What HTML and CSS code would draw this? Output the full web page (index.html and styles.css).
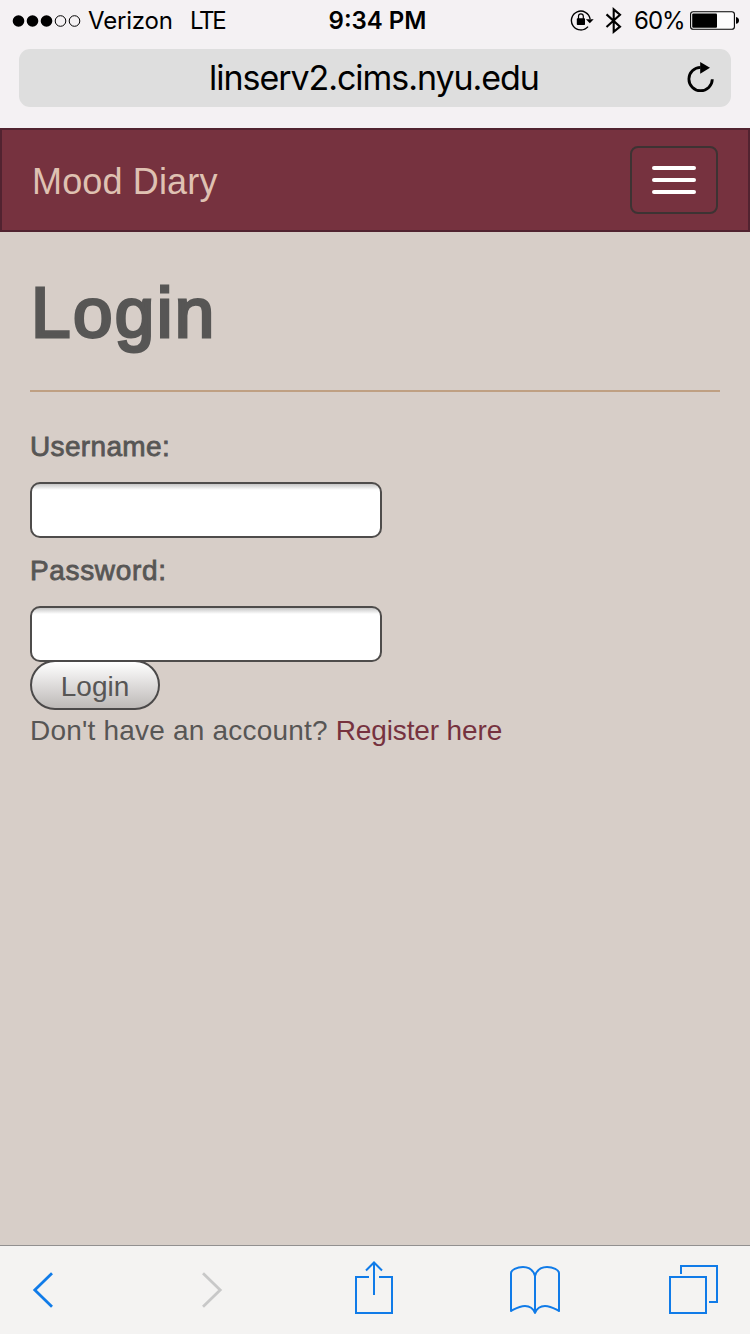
FILE: index.html
```html
<!DOCTYPE html>
<html lang="en">
<head>
<meta charset="utf-8">
<title>Mood Diary</title>
<link rel="stylesheet" href="styles.css">
</head>
<body>
<div class="screen">
  <header class="browser-top">
    <div class="status">
      <div class="status-left">
        <svg class="signal" width="70" height="16" viewBox="0 0 70 16"><circle cx="6.5" cy="8" r="5.8"/><circle cx="20.5" cy="8" r="5.8"/><circle cx="34.5" cy="8" r="5.8"/><g fill="none" stroke="#000" stroke-width="1"><circle cx="48.5" cy="8" r="5.3"/><circle cx="62.5" cy="8" r="5.3"/></g></svg>
        <span class="carrier">Verizon</span>
        <span class="network">LTE</span>
      </div>
      <div class="time">9:34 PM</div>
      <div class="status-right">
        <svg class="lock" width="24" height="24" viewBox="0 0 24 24"><path d="M18 17.6A9.4 9.4 0 1 1 20.1 10" fill="none" stroke="#000" stroke-width="1.4"/><path d="M15.9 10.2h7.8l-3.9 4z"/><rect x="6.8" y="9.3" width="8.2" height="6.6" rx=".7"/><path d="M8.5 10V7.2a2.4 2.4 0 0 1 4.8 0V10" fill="none" stroke="#000" stroke-width="1.2"/></svg>
        <svg class="bluetooth" width="18" height="28" viewBox="0 0 18 28"><path d="M1.5 7.4L15 19.6 8.7 24.8V2.4L15 7.8 1.5 20" fill="none" stroke="#000" stroke-width="2.1"/></svg>
        <span class="percent">60%</span>
        <svg class="battery" width="50" height="20" viewBox="0 0 50 20"><rect x=".6" y=".7" width="43.8" height="17.6" rx="2.6" fill="#fdfcfd" stroke="#000" stroke-width="1.1"/><rect x="2.2" y="2.4" width="24.8" height="14.4" rx="1"/><path d="M46 6q3 .6 3 3.4t-3 3.4z"/></svg>
      </div>
    </div>
    <div class="address">
      <span class="url">linserv2.cims.nyu.edu</span>
      <svg class="reload" width="30" height="32" viewBox="0 0 30 32"><path d="M26.3 18.2A11.7 11.7 0 1 1 14.6 6.3" fill="none" stroke="#000" stroke-width="2.8"/><path d="M14.2.9v11.8l9.8-5.9z"/></svg>
    </div>
  </header>

  <nav class="navbar">
    <a class="brand">Mood Diary</a>
    <button class="toggle" aria-label="Menu"><span class="bar"></span><span class="bar"></span><span class="bar"></span></button>
  </nav>

  <main class="content">
    <h1 class="title">Login</h1>
    <form class="form">
      <label class="label" for="user">Username:</label>
      <input class="field" id="user" type="text">
      <label class="label label-next" for="pass">Password:</label>
      <input class="field" id="pass" type="password">
      <button class="submit" type="button">Login</button>
    </form>
    <p class="signup">Don't have an account? <a class="link">Register here</a></p>
  </main>

  <footer class="toolbar">
    <svg class="back" width="24" height="40" viewBox="0 0 24 40"><path d="M20 3.2L2.8 20 20 36.8"/></svg>
    <svg class="forward" width="24" height="40" viewBox="0 0 24 40"><path d="M3 3.2L20.2 20 3 36.8"/></svg>
    <svg class="share" width="40" height="56" viewBox="0 0 40 56"><path d="M15 17H2v36h36V17H25M20 35V3M12 10.5L20 2.5l8 8"/></svg>
    <svg class="book" width="52" height="52" viewBox="0 0 52 52"><path stroke-linejoin="round" d="M26 11C24 4 19 2 14 2 8 2 2 5 2 8v38c4-2 8-5 14-5 5 0 8 2 10 7 2-5 5-7 10-7 6 0 10 3 14 5V8c0-3-6-6-12-6-5 0-10 2-12 9zM26 11v37"/></svg>
    <svg class="tabs" width="50" height="50" viewBox="0 0 50 50"><path d="M2 13h36v36H2zM13 10V2h36v36h-8"/></svg>
  </footer>
</div>
</body>
</html>
```
FILE: styles.css
```css
* { box-sizing: border-box; }
body { margin: 0; }
.screen { width: 750px; height: 1334px; display: flex; flex-direction: column; background: #d7cec8; color: #575655; font: 28px/40px "Liberation Sans", Arial, sans-serif; overflow: hidden; }
svg { display: block; flex: none; }

.browser-top { height: 128px; flex: none; background: #f4f1f3; color: #000; font-family: Inter, sans-serif; }
.status { height: 49px; padding: 1px 10px 8px 12px; display: grid; grid-template-columns: 1fr 104px 1fr; align-items: center; font-size: 24px; line-height: 40px; white-space: nowrap; }
.status-left, .status-right { display: flex; align-items: center; }
.status-right { justify-content: flex-end; }
.carrier { margin-left: 6px; width: 84px; letter-spacing: -.2px; }
.network { margin-left: 18px; letter-spacing: -2.2px; }
.time { text-align: center; font-weight: 600; font-size: 24px; padding-left: 3px; }
.bluetooth { margin-left: 11px; }
.percent { margin-left: 11px; width: 50px; letter-spacing: -1px; }
.battery { margin-left: 6px; }
.address { height: 58px; margin: 0 19px; border-radius: 11px; background: #dedede; display: flex; align-items: center; justify-content: center; position: relative; font-size: 34px; line-height: 58px; }
.url { letter-spacing: -1.05px; margin-left: -2px; }
.reload { position: absolute; right: 15px; top: 12px; }

.navbar { height: 104px; flex: none; border: 2px solid #512330; background: #76323f; display: flex; align-items: center; justify-content: space-between; padding: 0 30px; }
.brand { color: #dfc1b2; font-size: 36px; line-height: 48px; margin-top: 4px; letter-spacing: .15px; }
.toggle { width: 88px; height: 68px; border: 2px solid #3d3333; border-radius: 8px; background: none; padding: 0; display: flex; flex-direction: column; align-items: center; justify-content: center; gap: 8px; }
.bar { width: 44px; height: 4px; border-radius: 2px; background: #fff; }

.content { flex: 1; padding: 42px 30px 0; }
.title { margin: 0 0 35px; height: 118px; padding-left: 1px; border-bottom: 2px solid #bfa083; font-size: 71px; line-height: 78px; font-weight: 400; letter-spacing: 2.4px; -webkit-text-stroke: 3px #575655; }
.form { display: flex; flex-direction: column; align-items: flex-start; }
.label { height: 55px; -webkit-text-stroke: .8px #575655; letter-spacing: .35px; }
.label-next { margin-top: 13px; letter-spacing: .65px; }
.field { width: 352px; height: 56px; border: 2px solid #4e4c4b; border-radius: 10px; background: #fff linear-gradient(#c6c6c6, #fff 6px) no-repeat; outline: none; }
.submit { width: 130px; height: 50px; margin-top: -2px; padding: 4px 0 0; border: 2px solid #4b4949; border-radius: 25px; background: linear-gradient(#fff, #bdb9b7); color: #575655; font: inherit; position: relative; }
.signup { margin: 1px 0 0; letter-spacing: .2px; }
.link { color: #76323f; letter-spacing: -.13px; }

.toolbar { height: 89px; flex: none; border-top: 1px solid #929090; background: #f4f3f2; display: flex; align-items: flex-start; }
.toolbar svg { fill: none; stroke: #107be8; stroke-width: 2; }
.toolbar .back { margin: 24px 0 0 32px; stroke-width: 2.8; }
.toolbar .forward { margin: 24px 0 0 144px; stroke: #c8c8c8; stroke-width: 2.8; }
.share { margin: 14px 0 0 130px; }
.book { margin: 19px 0 0 115px; }
.tabs { margin: 18px 0 0 107px; }
```
